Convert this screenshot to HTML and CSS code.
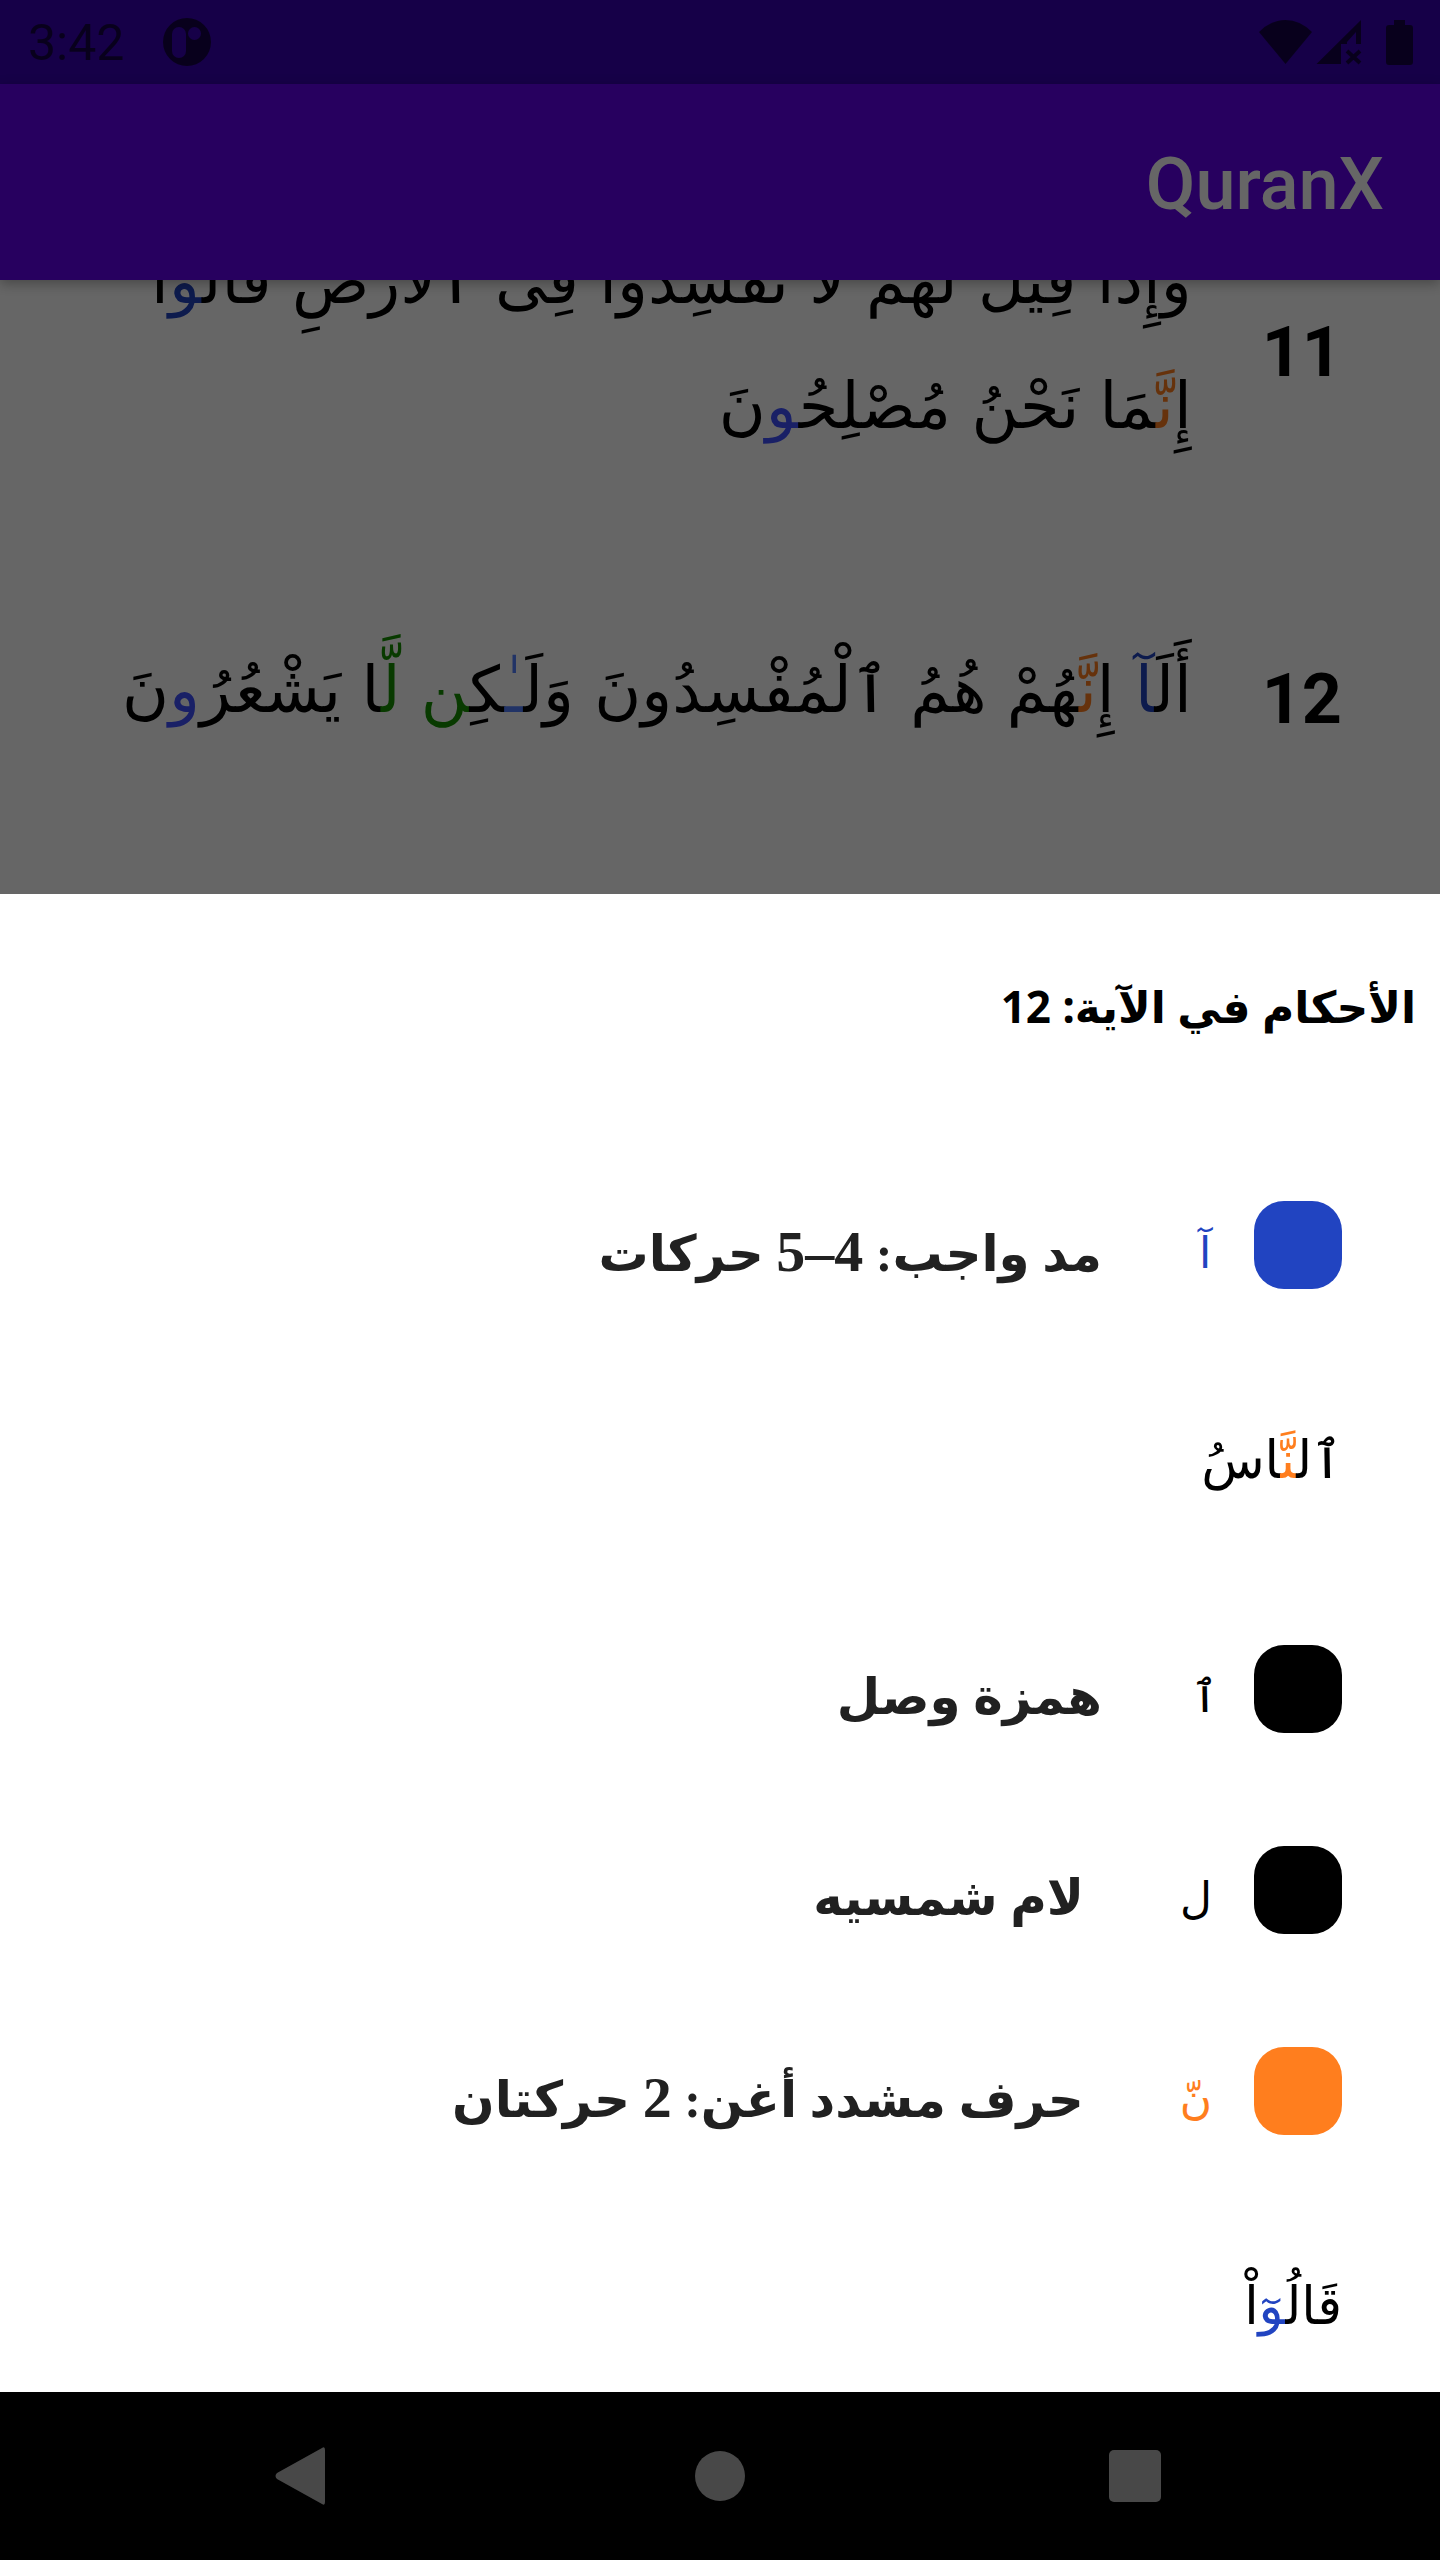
FILE: index.html
```html
<!DOCTYPE html>
<html lang="ar" dir="rtl">
<head>
<meta charset="utf-8">
<meta name="viewport" content="width=device-width, initial-scale=1">
<title>QuranX</title>
<link rel="stylesheet" href="styles.css">
</head>
<body>
<div class="backdrop">
  <div class="status-bar" dir="ltr">
    <span class="clock">3:42</span>
    <svg class="app-icon" width="50" height="50" viewBox="0 0 50 50" aria-hidden="true">
      <path fill="currentColor" fill-rule="evenodd" d="M25 1a24 24 0 1 0 0 48a24 24 0 1 0 0-48zM17 10a7 7 0 0 1 7 7v17a7 7 0 0 1-14 0v-17a7 7 0 0 1 7-7zM32.500 10a6.500 6.500 0 1 1 0 13a6.500 6.500 0 1 1 0-13z"/>
    </svg>
    <svg class="system-icons" width="156" height="48" viewBox="0 0 156 48" aria-hidden="true">
      <g fill="currentColor">
        <path d="M0 14Q12 2 26.500 2T53 14L26.500 46z"/>
        <path fill-rule="evenodd" d="M102 2v24h-5V14l-9 10v2h-6v20H57.500z"/>
        <path d="M135 2h11v5h5q3 0 3 3v34q0 3-3 3h-21q-3 0-3-3V10q0-3 3-3h5z"/>
      </g>
      <path d="M88 33l13 12M101 33L88 45" stroke="currentColor" stroke-width="4"/>
    </svg>
  </div>
  <header class="app-bar"><h1>QuranX</h1></header>
  <main class="verses">
    <article class="verse">
      <span class="verse-number">11</span>
      <p class="verse-text">وَإِذَا قِيلَ لَهُمْ لَا تُفْسِدُوا فِى ٱلْأَرْضِ قَالُ<span class="madd">و</span>ا<br>إِ<span class="ghunna">نَّ</span>مَا نَحْنُ مُصْلِحُ<span class="natural">و</span>نَ</p>
    </article>
    <article class="verse">
      <span class="verse-number">12</span>
      <p class="verse-text">أَلَ&zwj;<span class="madd">&zwj;آ</span> إِ<span class="ghunna">نَّ</span>هُمْ هُمُ ٱلْمُفْسِدُونَ وَلَ<span class="dagger">ـٰ</span>كِ<span class="idgham">ن</span> <span class="idgham">لَّ&zwj;</span>&zwj;ا يَشْعُرُ<span class="natural">و</span>نَ</p>
    </article>
  </main>
</div>
<section class="sheet" aria-labelledby="sheet-title">
  <h2 id="sheet-title">الأحكام في الآية: 12</h2>
  <div class="rule">
    <span class="swatch swatch-madd"></span>
    <span class="symbol symbol-narrow symbol-madd">آ</span>
    <span class="label">مد واجب: <span class="count">4–5</span> حركات</span>
  </div>
  <p class="example">ٱل<span class="ghunna">نَّ</span>اسُ</p>
  <div class="rule">
    <span class="swatch"></span>
    <span class="symbol symbol-narrow">ٱ</span>
    <span class="label">همزة وصل</span>
  </div>
  <div class="rule">
    <span class="swatch"></span>
    <span class="symbol">ل</span>
    <span class="label">لام شمسيه</span>
  </div>
  <div class="rule">
    <span class="swatch swatch-ghunna"></span>
    <span class="symbol symbol-ghunna">نّ</span>
    <span class="label">حرف مشدد أغن: <span class="count">2</span> حركتان</span>
  </div>
  <p class="example">قَالُ<span class="madd">وٓ</span>اْ</p>
</section>
<nav class="nav-bar" dir="ltr">
  <button type="button" aria-label="Back">
    <svg width="60" height="60" viewBox="0 0 60 60"><path fill="currentColor" d="M48 2q3-2 3 2v52q0 4-3 2L3 33q-3-3 0-6z"/></svg>
  </button>
  <button type="button" aria-label="Home">
    <svg width="60" height="60" viewBox="0 0 60 60"><circle cx="30" cy="30" r="25" fill="currentColor"/></svg>
  </button>
  <button type="button" aria-label="Recent apps">
    <svg width="60" height="60" viewBox="0 0 60 60"><rect x="3" y="4" width="52" height="52" rx="5" fill="currentColor"/></svg>
  </button>
</nav>
</body>
</html>
```
FILE: styles.css
```css
* { box-sizing: border-box; }

body {
  margin: 0;
  height: 100vh;
  display: flex;
  flex-direction: column;
  background: #fff;
  color: #000;
  font-family: Roboto, "DejaVu Sans", sans-serif;
}

h1, h2, p { margin: 0; }

.backdrop {
  position: relative;
  flex: none;
}

/* dims everything behind the open sheet */
.backdrop::after {
  content: "";
  position: absolute;
  inset: 0;
  background: rgba(0, 0, 0, 0.6);
}

.status-bar {
  display: flex;
  align-items: center;
  height: 84px;
  padding: 0 25px 0 28px;
  background: #3700b3;
  color: rgba(0, 0, 0, 0.6);
}

.clock {
  padding-top: 2px;
  font-size: 50px;
  line-height: 82px;
}

.app-icon { margin-left: 38px; }

.system-icons { margin-left: auto; }

.app-bar {
  position: relative;
  display: flex;
  align-items: center;
  height: 196px;
  padding: 6px 56px 0;
  background: #6200ee;
  color: #fff;
  box-shadow: 0 4px 12px rgba(0, 0, 0, 0.3);
}

.app-bar h1 {
  font-size: 72px;
  font-weight: 500;
  line-height: 84px;
}

.verses {
  display: flex;
  flex-direction: column;
  justify-content: flex-end;
  height: 24vh;
  padding-bottom: 62px;
  overflow: hidden;
}

.verse {
  flex: none;
  display: flex;
  align-items: center;
  gap: 70px;
  padding: 80px 98px 63px;
}

.verse-number {
  font-size: 70px;
  font-weight: 700;
  line-height: 84px;
}

.verse-text {
  padding-bottom: 16px;
  font-family: "DejaVu Sans", sans-serif;
  font-size: 64px;
  line-height: 125px;
  white-space: nowrap;
}

.madd { color: #2144c1; }
.natural { color: #4050ff; }
.dagger { color: #537fff; }
.ghunna { color: #ff7e1e; }
.idgham { color: #169200; }

.sheet {
  flex: 1;
  min-height: 0;
  overflow-y: auto;
  scrollbar-width: none;
  background: #fff;
}

.sheet h2 {
  padding: 70px 24px 96px;
  font-family: "Noto Sans", "DejaVu Sans", sans-serif;
  font-size: 44px;
  font-weight: 700;
  line-height: 84px;
}

.rule {
  display: flex;
  align-items: center;
  height: 201px;
  padding: 0 98px;
}

.swatch {
  width: 88px;
  height: 88px;
  border-radius: 30px;
  background: #000;
}

.swatch-madd { background: #2144c1; }
.swatch-ghunna { background: #ff7e1e; }

.symbol {
  display: flex;
  justify-content: center;
  margin-right: 42px;
  padding-top: 16px;
  font-family: "DejaVu Sans", sans-serif;
  font-size: 44px;
  line-height: 84px;
}

.symbol-narrow { width: 14px; }
.symbol-madd { color: #2144c1; }
.symbol-ghunna { color: #ff7e1e; }

.label {
  margin-right: 96px;
  padding-top: 16px;
  color: #212121;
  font-family: "Liberation Serif", "DejaVu Sans", serif;
  font-size: 50px;
  font-weight: 700;
  line-height: 84px;
}

.count { font-size: 58px; }

.example {
  padding: 54px 98px 66px;
  font-family: "DejaVu Sans", sans-serif;
  font-size: 52px;
  line-height: 123px;
}

.nav-bar {
  flex: none;
  display: grid;
  grid-template-columns: repeat(3, 1fr);
  height: 168px;
  padding: 0 96px;
  background: #000;
}

.nav-bar button {
  display: flex;
  align-items: center;
  justify-content: center;
  padding: 0;
  border: 0;
  background: none;
  color: #484848;
}
```
